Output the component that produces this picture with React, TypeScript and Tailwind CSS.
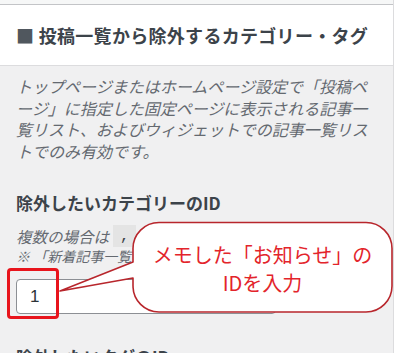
import React from "react";

const jp = `font-['Noto_Sans_CJK_JP',_'Noto_Sans',_sans-serif]`;

const Callout = () => {
  return (
    <div className="absolute left-0 top-0 w-[405px] h-[353px] pointer-events-none">
      <svg width="405" height="353" className="absolute left-0 top-0">
        <path
          d="M159 222.5 H366 A26 26 0 0 1 392 248.5 V286 A26 26 0 0 1 366 312 H159 A26 26 0 0 1 133 286 V278 L60 291 L133 262 V248.5 A26 26 0 0 1 159 222.5 Z"
          fill="#ffffff"
          stroke="#b8262c"
          strokeWidth="1.6"
          strokeLinejoin="round"
        />
      </svg>
      <div
        className={`absolute left-[133px] top-[223px] w-[259px] h-[89px] flex flex-col items-center justify-center pt-[3px] text-[20px] leading-[28px] text-[#e3242b] ${jp}`}
      >
        <span>メモした「お知らせ」の</span>
        <span>IDを入力</span>
      </div>
      <div className="absolute left-[7px] top-[268px] w-[52px] h-[51px] border-[3px] border-[#e8141c] rounded-[4px]" />
    </div>
  );
};

export default function App() {
  return (
    <div lang="ja" className={`relative w-[405px] h-[353px] overflow-hidden bg-white ${jp}`}>
      <div className="w-[394px] h-full border-r border-[#dcdcde] flex flex-col">
        <div className="shrink-0 h-[5px] bg-[#f6f7f7] border-b border-[#c3c4c7]" />
        <div className="shrink-0 h-[61px] bg-white border-b border-[#dcdcde] flex items-center px-4">
          <h2 className="text-[18px] font-bold text-[#3c434a] tracking-[0.3px] whitespace-nowrap">
            <span className="text-[#50575e]">■</span> 投稿一覧から除外するカテゴリー・タグ
          </h2>
        </div>
        <div className="flex-1 min-h-0 overflow-hidden bg-[#f0f0f1] px-4 pt-[10px]">
          <p className="text-[16px] leading-[21.5px] italic text-[#646970] whitespace-nowrap">
            トップページまたはホームページ設定で「投稿ペ
            <br />
            ージ」に指定した固定ページに表示される記事一
            <br />
            覧リスト、およびウィジェットでの記事一覧リス
            <br />
            トでのみ有効です。
          </p>
          <div className="mt-[29px] text-[17px] leading-[24px] font-bold text-[#3c434a]">
            除外したいカテゴリーのID
          </div>
          <div className="mt-[10px] text-[15.5px] leading-[20px] italic text-[#646970] whitespace-nowrap flex items-center">
            <span>複数の場合は</span>
            <code className="not-italic bg-[#e4e4e4] px-[7px] h-[22px] ml-[4px] flex items-center text-[#3c434a]">,</code>
            <span className="ml-[4px]">で区切ってください</span>
          </div>
          <div className="text-[14px] leading-[19px] italic text-[#646970] whitespace-nowrap">
            ※ 「新着記事一覧」ウィジェットには反映されません
          </div>
          <input
            readOnly
            value="1"
            className="mt-[13px] block w-[260px] h-[35px] bg-white border border-[#8c8f94] rounded-[4px] px-[13px] text-[17px] text-[#2c3338] font-['Liberation_Sans',_sans-serif] outline-none"
          />
          <div className="mt-[31px] text-[17px] leading-[24px] font-bold text-[#3c434a]">
            除外したいタグのID
          </div>
        </div>
      </div>
      <Callout />
    </div>
  );
}
